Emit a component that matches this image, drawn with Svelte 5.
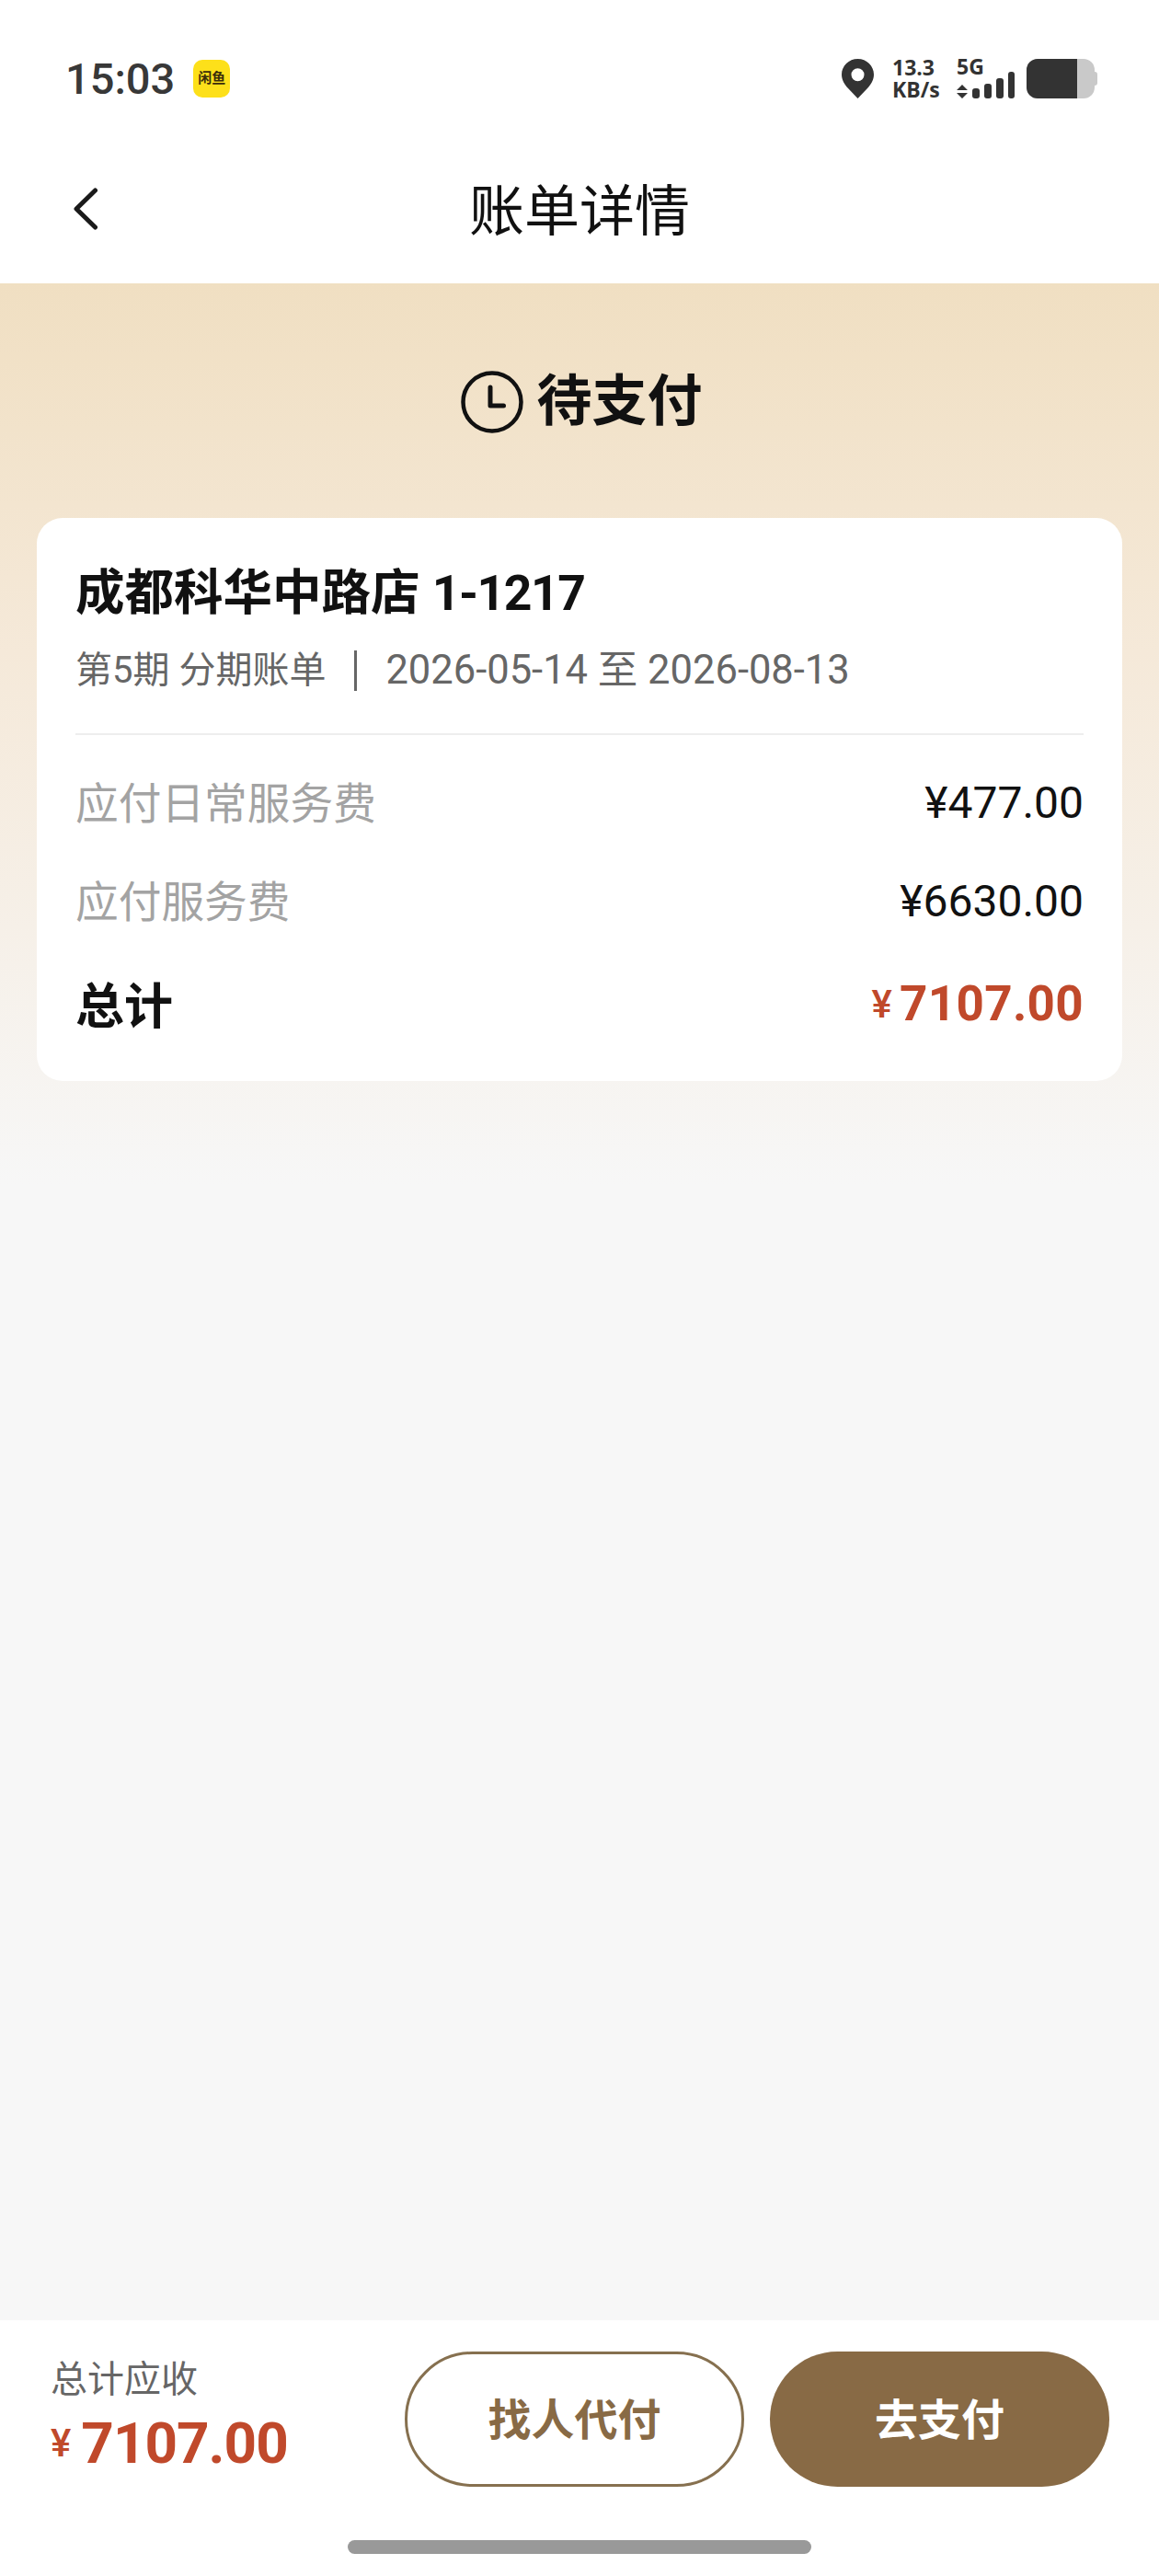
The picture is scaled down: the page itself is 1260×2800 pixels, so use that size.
<script>
  const rows = [
    { label: '应付日常服务费', value: '¥477.00' },
    { label: '应付服务费', value: '¥6630.00' }
  ];
</script>

<div class="page">
  <header class="top">
    <div class="status">
      <div class="left">
        <span class="time">15:03</span>
        <span class="app">闲鱼</span>
      </div>
      <div class="right">
        <svg class="pin" viewBox="0 0 35 43"><path fill-rule="evenodd" fill="#333" d="M17.5 0C7.8 0 0 7.6 0 17c0 6 3.200 10.800 7 15l10.500 11L28 32c3.800-4.200 7-9 7-15C35 7.600 27.200 0 17.500 0zM17.500 10.200a7 7 0 1 1 0 14 7 7 0 0 1 0-14z"/></svg>
        <div class="speed"><span>13.3</span><span>KB/s</span></div>
        <div class="net">
          <span class="g">5G</span>
          <svg class="sig" viewBox="0 0 63 29">
            <path fill="#333" d="M6 14l6 6H0zM0 23h12l-6 6z"/>
            <rect x="17" y="18" width="8" height="11" rx="3" fill="#333"/>
            <rect x="30" y="13" width="8" height="16" rx="3" fill="#333"/>
            <rect x="43" y="7" width="8" height="22" rx="3" fill="#333"/>
            <rect x="56" y="0" width="7" height="29" rx="3" fill="#333"/>
          </svg>
        </div>
        <div class="battery"><span class="level"></span><span class="tip"></span></div>
      </div>
    </div>
    <div class="nav">
      <svg class="back" viewBox="0 0 26 46"><path d="M23.500 3L3 23l20.500 20" fill="none" stroke="#1a1a1a" stroke-width="5" stroke-linecap="round" stroke-linejoin="round"/></svg>
      <h1>账单详情</h1>
    </div>
  </header>

  <main class="body">
    <div class="state">
      <svg class="clock" viewBox="0 0 68 68">
        <circle cx="34" cy="34" r="31.500" fill="none" stroke="#111" stroke-width="4.500"/>
        <path d="M32 18v20h14.500" fill="none" stroke="#111" stroke-width="5" stroke-linecap="round" stroke-linejoin="round"/>
      </svg>
      <span>待支付</span>
    </div>

    <section class="card">
      <h2>成都科华中路店 <span class="code">1-1217</span></h2>
      <p class="sub"><span>第5期 分期账单</span><i></i><span class="date">2026-05-14 至 2026-08-13</span></p>
      <div class="rule"></div>
      {#each rows as row}
        <div class="row"><span class="k">{row.label}</span><span class="v">{row.value}</span></div>
      {/each}
      <div class="row total">
        <span>总计</span>
        <span class="money"><small>¥</small>7107.00</span>
      </div>
    </section>
  </main>

  <footer class="bottom">
    <div class="bar">
      <div class="sum">
        <span class="cap">总计应收</span>
        <span class="money big"><small>¥</small>7107.00</span>
      </div>
      <div class="btns">
        <button class="ghost">找人代付</button>
        <button class="solid">去支付</button>
      </div>
    </div>
    <div class="home"></div>
  </footer>
</div>

<style>
  :global(body) { margin: 0; background: #f7f7f7; }
  .page {
    width: 1260px; height: 2800px; display: flex; flex-direction: column;
    font-family: Roboto, "Noto Sans CJK SC", sans-serif; color: #111; background: #f7f7f7;
  }
  .top { background: #fff; height: 308px; flex: none; }
  .status { height: 170px; display: flex; justify-content: space-between; align-items: center; padding: 0 70px 0 71px; box-sizing: border-box; }
  .left { display: flex; align-items: center; gap: 20px; }
  .time { font-size: 47px; font-weight: 500; color: #383838; line-height: 1; }
  .app {
    width: 40px; height: 41px; background: #fde01a; border-radius: 10px; display: flex; align-items: center; justify-content: center;
    font-size: 15px; font-weight: 700; color: #3a2d0a; white-space: nowrap; line-height: 1;
  }
  .right { display: flex; align-items: center; }
  .pin { width: 35px; height: 43px; margin-right: 20px; }
  .speed { display: flex; flex-direction: column; font-family: "Open Sans", sans-serif; font-weight: 700; color: #333; font-size: 23px; line-height: 24px; width: 70px; }
  .net { margin-right: 13px; width: 63px; height: 44px; position: relative; }
  .g { display: block; font-family: "Open Sans", sans-serif; font-weight: 700; font-size: 23px; line-height: 18px; color: #333; }
  .sig { width: 63px; height: 29px; position: absolute; left: 0; bottom: 0; }
  .battery { width: 74px; height: 43px; background: #c9c9c9; border-radius: 12px; position: relative; }
  .level { display: block; width: 55px; height: 43px; background: #333; border-radius: 12px 0 0 12px; }
  .tip { position: absolute; left: 74px; top: 14px; width: 3px; height: 15px; background: #c9c9c9; border-radius: 0 3px 3px 0; }
  .nav { height: 138px; position: relative; display: flex; align-items: center; justify-content: center; }
  .back { position: absolute; left: 80px; top: 34px; width: 26px; height: 46px; }
  h1 { margin: 0; font-size: 60px; font-weight: 400; line-height: 1; color: #111; position: relative; top: -8px; }
  .body {
    flex: 1; background: linear-gradient(#f0dfc2 0, #f5e9d9 400px, #f6f0e8 700px, #f7f7f7 980px); padding: 0 40px; min-height: 0;
  }
  .state { height: 255px; display: flex; align-items: center; justify-content: center; gap: 15px; font-size: 60px; font-weight: 700; padding: 2px 0 0 4px; box-sizing: border-box; }
  .state span { line-height: 1; }
  .clock { width: 68px; height: 68px; }
  .card { background: #fff; border-radius: 28px; height: 612px; padding: 0 42px; box-sizing: border-box; }
  h2 { margin: 0; padding-top: 54px; font-size: 53.500px; font-weight: 700; line-height: 56px; color: #111; }
  .code { letter-spacing: -1.500px; }
  .sub { margin: 32px 0 0; display: flex; align-items: center; font-size: 40px; line-height: 48px; color: #666; }
  .date { font-size: 43.500px; }
  .sub i { width: 3px; height: 44px; background: #666; margin: 0 31px; }
  .rule { height: 2px; background: #eee; margin: 44px 0 17px; }
  .row { display: flex; justify-content: space-between; align-items: center; height: 107px; font-size: 46.700px; }
  .k { color: #a3a3a3; }
  .v { font-size: 48px; color: #111; padding-top: 5px; }
  .total { font-weight: 700; font-size: 53px; height: 120px; }
  .money { color: #c0492b; font-weight: 700; font-size: 53px; line-height: 1; display: inline-flex; align-items: center; padding-top: 3px; letter-spacing: 0.3px; }
  .money small { font-size: 42px; font-weight: 500; margin-right: 8px; }
  .bottom { background: #fff; height: 278px; flex: none; position: relative; }
  .bar { display: flex; justify-content: space-between; padding: 34px 54px 0 55px; }
  .sum { display: flex; flex-direction: column; padding-top: 7px; }
  .cap { font-size: 40px; line-height: 48px; color: #666; }
  .big { font-size: 62px; margin-top: 14px; letter-spacing: -1px; padding-top: 0; }
  .big small { font-size: 42px; margin-right: 12px; }
  .btns { display: flex; gap: 28px; }
  button {
    width: 369px; height: 147px; border-radius: 74px; font-family: inherit; font-size: 47px; font-weight: 700; box-sizing: border-box; padding: 0 0 6px;
  }
  .ghost { background: #fff; border: 3px solid #86704f; color: #886a45; }
  .solid { background: #886a45; border: 0; color: #fff; }
  .home { position: absolute; left: 378px; top: 239px; width: 504px; height: 15px; border-radius: 8px; background: #999; }
</style>
